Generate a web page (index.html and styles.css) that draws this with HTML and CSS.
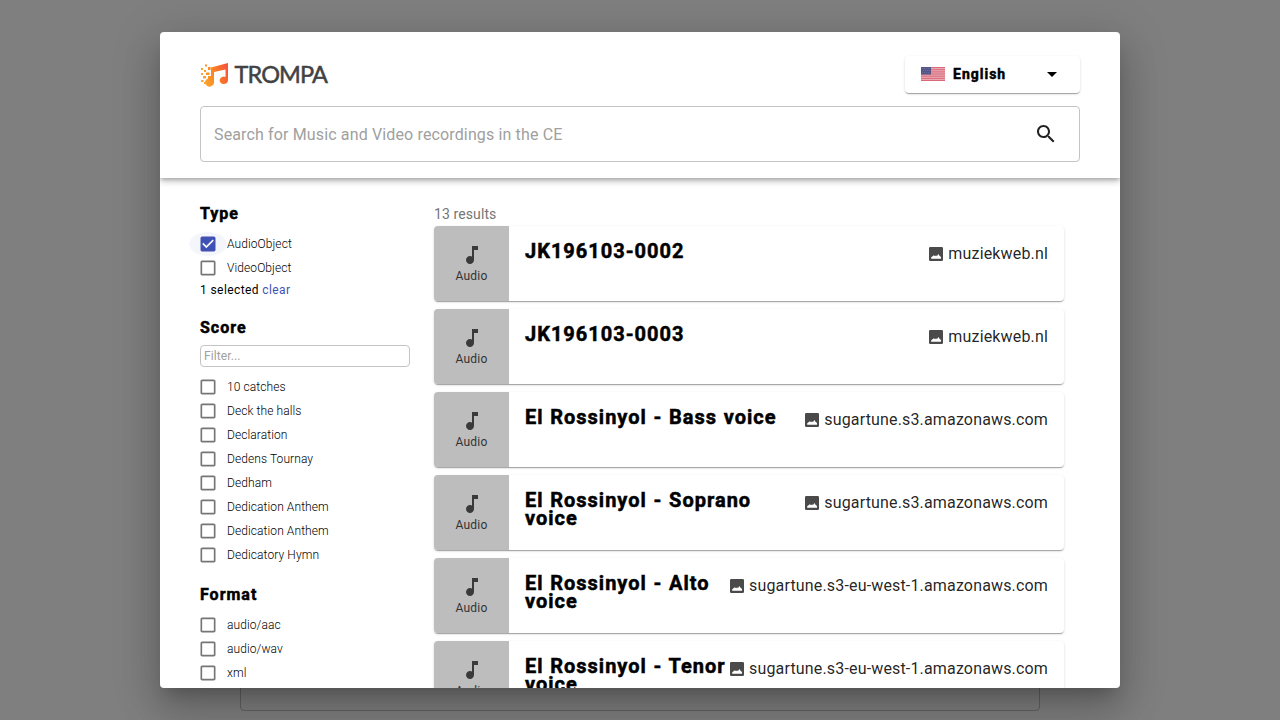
FILE: index.html
```html
<!DOCTYPE html>
<html lang="en">
<head>
<meta charset="utf-8">
<title>TROMPA</title>
<link rel="stylesheet" href="styles.css">
</head>
<body>
<svg class="defs" width="0" height="0">
  <symbol id="note" viewBox="0 0 24 24"><path d="M12 3v10.55c-.59-.34-1.27-.55-2-.55-2.21 0-4 1.79-4 4s1.79 4 4 4 4-1.79 4-4V7h4V3h-6z"/></symbol>
  <symbol id="image" viewBox="0 0 14 14"><path fill-rule="evenodd" d="M1.3 0h11.4A1.3 1.3 0 0 1 14 1.3v11.4a1.3 1.3 0 0 1-1.3 1.3H1.3A1.3 1.3 0 0 1 0 12.7V1.3A1.3 1.3 0 0 1 1.3 0zM2.2 11.8h9.8V10l-1.5-1.2-1.1-1.8-1.5 2.2-.8-.9-1 1-1.2-1-2.700 2z"/></symbol>
  <symbol id="box" viewBox="0 0 24 24"><path d="M19 5v14H5V5h14m0-2H5c-1.1 0-2 .9-2 2v14c0 1.1.9 2 2 2h14c1.1 0 2-.9 2-2V5c0-1.1-.9-2-2-2z"/></symbol>
  <symbol id="checked" viewBox="0 0 24 24"><path d="M19 3H5c-1.11 0-2 .9-2 2v14c0 1.1.89 2 2 2h14c1.11 0 2-.9 2-2V5c0-1.1-.89-2-2-2zm-9 14l-5-5 1.41-1.41L10 14.17l7.59-7.59L19 8l-9 9z"/></symbol>
</svg>
<div class="page-box"></div>
<main class="dialog">
  <header class="header">
    <div class="topbar">
      <svg class="logo" width="130" height="30" viewBox="0 0 130 30">
        <defs><linearGradient id="flame" gradientUnits="userSpaceOnUse" x1="0" x2="28" y1="20" y2="10"><stop offset="0" stop-color="#fcae3c"/><stop offset=".45" stop-color="#fb8a1e"/><stop offset="1" stop-color="#f6553a"/></linearGradient></defs>
        <g fill="url(#flame)">
          <path d="M11 7.5L28 3v17.5a4.2 3.7 0 1 1-2.5-3.6V9.5L14 12v10.5a4.5 4.2 0 1 1-3-4z"/>
          <path d="M1 8h2v2H1zM5 4.5h2v2H5zM8 7h2.5v3H8zM4 10h2v2H4zM1 13h2v2H1zM6 12.5h3.5v2.5H6zM3 16h3v2.5H3zM1 20h2.5v2H1zM8 16h3v3H8zM4 22h2v2H4z"/>
        </g>
        <text class="logo-text" x="34.5" y="23" textLength="93.5">TROMPA</text>
      </svg>
      <div class="language">
        <svg width="24" height="14" viewBox="0 0 24 14">
          <rect width="24" height="14" fill="#e9a9b1"/>
          <path d="M0 .5h24M0 2.7h24M0 4.9h24M0 7h24M0 9.2h24M0 11.4h24M0 13.5h24" stroke="#d9697a"/>
          <rect width="10" height="7.5" fill="#555587"/>
          <path d="M1 1.5h8M2 3.5h7M1 5.5h8" stroke="#7979a2" stroke-width=".8" stroke-dasharray=".8 1.2"/>
        </svg>
        <span class="language-name">English</span>
        <svg width="24" height="24" viewBox="0 0 24 24"><path d="M7 10l5 5 5-5z"/></svg>
      </div>
    </div>
    <div class="search">
      <span>Search for Music and Video recordings in the CE</span>
      <svg width="24" height="24" viewBox="0 0 24 24"><path fill="#212121" d="M15.5 14h-.79l-.28-.27C15.41 12.59 16 11.11 16 9.5 16 5.91 13.09 3 9.5 3S3 5.91 3 9.5 5.91 16 9.5 16c1.61 0 3.09-.59 4.23-1.57l.27.28v.79l5 4.99L20.49 19l-4.99-5zm-6 0C7.01 14 5 11.99 5 9.5S7.01 5 9.5 5 14 7.01 14 9.5 11.99 14 9.5 14z"/></svg>
    </div>
  </header>
  <div class="content">
    <aside class="filters">
      <section class="facet">
        <h2>Type</h2>
        <div class="option checked"><svg><use href="#checked"/></svg><span>AudioObject</span></div>
        <div class="option"><svg><use href="#box"/></svg><span>VideoObject</span></div>
        <div class="selected">1 selected <a>clear</a></div>
      </section>
      <section class="facet score">
        <h2>Score</h2>
        <div class="filter-input">Filter...</div>
        <div class="option"><svg><use href="#box"/></svg><span>10 catches</span></div>
        <div class="option"><svg><use href="#box"/></svg><span>Deck the halls</span></div>
        <div class="option"><svg><use href="#box"/></svg><span>Declaration</span></div>
        <div class="option"><svg><use href="#box"/></svg><span>Dedens Tournay</span></div>
        <div class="option"><svg><use href="#box"/></svg><span>Dedham</span></div>
        <div class="option"><svg><use href="#box"/></svg><span>Dedication Anthem</span></div>
        <div class="option"><svg><use href="#box"/></svg><span>Dedication Anthem</span></div>
        <div class="option"><svg><use href="#box"/></svg><span>Dedicatory Hymn</span></div>
      </section>
      <section class="facet">
        <h2>Format</h2>
        <div class="option"><svg><use href="#box"/></svg><span>audio/aac</span></div>
        <div class="option"><svg><use href="#box"/></svg><span>audio/wav</span></div>
        <div class="option"><svg><use href="#box"/></svg><span>xml</span></div>
      </section>
    </aside>
    <div class="results">
      <p class="count">13 results</p>
      <article class="card"><div class="thumb"><svg><use href="#note"/></svg>Audio</div><div class="card-body"><h3>JK196103-0002</h3><div class="source"><svg><use href="#image"/></svg>muziekweb.nl</div></div></article>
      <article class="card"><div class="thumb"><svg><use href="#note"/></svg>Audio</div><div class="card-body"><h3>JK196103-0003</h3><div class="source"><svg><use href="#image"/></svg>muziekweb.nl</div></div></article>
      <article class="card"><div class="thumb"><svg><use href="#note"/></svg>Audio</div><div class="card-body"><h3>El Rossinyol - Bass voice</h3><div class="source"><svg><use href="#image"/></svg>sugartune.s3.amazonaws.com</div></div></article>
      <article class="card"><div class="thumb"><svg><use href="#note"/></svg>Audio</div><div class="card-body"><h3>El Rossinyol - Soprano voice</h3><div class="source"><svg><use href="#image"/></svg>sugartune.s3.amazonaws.com</div></div></article>
      <article class="card"><div class="thumb"><svg><use href="#note"/></svg>Audio</div><div class="card-body"><h3>El Rossinyol - Alto voice</h3><div class="source"><svg><use href="#image"/></svg>sugartune.s3-eu-west-1.amazonaws.com</div></div></article>
      <article class="card"><div class="thumb"><svg><use href="#note"/></svg>Audio</div><div class="card-body"><h3>El Rossinyol - Tenor voice</h3><div class="source"><svg><use href="#image"/></svg>sugartune.s3-eu-west-1.amazonaws.com</div></div></article>
    </div>
  </div>
</main>
</body>
</html>
```
FILE: styles.css
```css
* { box-sizing: border-box; }
body {
  margin: 0;
  height: 720px;
  padding: 32px 160px;
  overflow: hidden;
  position: relative;
  background: #7f7f7f;
  font-family: Roboto, sans-serif;
  color: rgba(0, 0, 0, .87);
}
.defs { position: absolute; }
.page-box {
  position: absolute;
  left: 240px;
  top: 200px;
  width: 800px;
  height: 511px;
  border: 1px solid #626262;
  border-radius: 4px;
}
.dialog {
  position: relative;
  display: flex;
  flex-direction: column;
  height: 656px;
  overflow: hidden;
  background: #fff;
  border-radius: 4px;
  box-shadow: 0 11px 15px -7px rgba(0,0,0,.2), 0 24px 38px 3px rgba(0,0,0,.14), 0 9px 46px 8px rgba(0,0,0,.12);
}
.header {
  position: relative;
  flex: none;
  height: 146px;
  padding: 24px 40px 0;
  box-shadow: 0 2px 4px -1px rgba(0,0,0,.2), 0 4px 5px rgba(0,0,0,.14), 0 1px 10px rgba(0,0,0,.12);
}
.topbar { display: flex; justify-content: space-between; height: 50px; }
.logo { margin-top: 4px; overflow: visible; }
.logo-text { font: 23.5px Lato, sans-serif; fill: #414244; stroke: #414244; stroke-width: .5px; }
.language {
  display: flex;
  align-items: center;
  width: 175px;
  height: 37px;
  padding: 0 16px 1px;
  border-radius: 4px;
  box-shadow: 0 2px 1px -1px rgba(0,0,0,.2), 0 1px 1px rgba(0,0,0,.14), 0 1px 3px rgba(0,0,0,.12);
}
.language-name { flex: 1; margin-left: 8px; font-size: 14px; font-weight: 900; letter-spacing: 1px; color: #000; }
.search {
  display: flex;
  align-items: center;
  justify-content: space-between;
  height: 56px;
  padding: 0 21px 0 13px;
  border: 1px solid #c4c4c4;
  border-radius: 4px;
  font-size: 16px;
  letter-spacing: .14px;
  color: #a0a0a0;
}
.content { display: flex; gap: 24px; flex: 1; min-height: 0; padding: 24px 56px 0 40px; }
.filters { width: 210px; flex: none; }
.facet { margin-bottom: 16px; }
h2 { margin: 0; height: 30px; font-size: 16px; line-height: 24px; font-weight: 900; letter-spacing: 1px; color: #000; }
.language-name, h2 { font-weight: 700; -webkit-text-stroke: .5px #000; }
.option { display: flex; align-items: center; height: 24px; font-size: 12px; font-weight: 300; letter-spacing: .09px; color: #000; }
.option svg { width: 20px; height: 20px; margin: 0 9px 0 -2px; fill: #757575; }
.option.checked { margin-left: -11px; padding-left: 11px; background: radial-gradient(ellipse 19px 12px at 19px 12px, #f5f6fb 97%, transparent); }
.option.checked svg { fill: #3f51b5; }
.selected { height: 20px; line-height: 20px; font-size: 12px; letter-spacing: .4px; color: #000; }
.selected a { color: #3f51b5; }
.filter-input { height: 22px; margin: -1px 0 8px; padding-left: 3px; border: 1px solid #c4c4c4; border-radius: 4px; font-size: 12px; line-height: 20px; letter-spacing: .1px; color: #a0a0a0; }
.results { flex: 1; min-width: 0; }
.count { margin: 0; height: 24px; line-height: 24px; font-size: 14px; letter-spacing: .1px; color: #757575; }
.card {
  display: flex;
  height: 75px;
  margin-bottom: 8px;
  overflow: hidden;
  border-radius: 4px;
  background: #fff;
  box-shadow: 0 2px 1px -1px rgba(0,0,0,.2), 0 1px 1px rgba(0,0,0,.14), 0 1px 3px rgba(0,0,0,.12);
}
.thumb { display: flex; flex-direction: column; align-items: center; flex: none; width: 75px; padding-top: 17px; background: #bdbdbd; font-size: 12px; line-height: 18px; letter-spacing: .2px; color: #333; }
.thumb svg { width: 24px; height: 24px; fill: #3a3a3a; }
.card-body { display: flex; justify-content: space-between; flex: 1; padding: 16px 16px 0; }
h3 { margin: 0; font-size: 20px; line-height: 18px; font-weight: 700; letter-spacing: 1px; word-spacing: .7px; color: #000; -webkit-text-stroke: .5px #000; }
.source { display: flex; align-items: center; height: 22px; font-size: 16px; letter-spacing: .16px; white-space: nowrap; }
.source svg { width: 14px; height: 14px; margin: 2px 5px 0 0; fill: #4a4a4a; }
```
